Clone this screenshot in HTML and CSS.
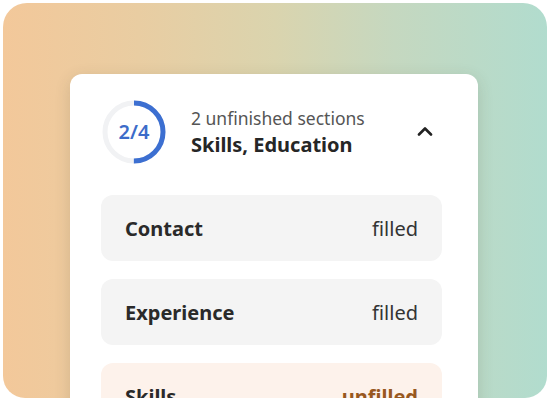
FILE: index.html
```html
<!DOCTYPE html>
<html lang="en">
<head>
<meta charset="utf-8">
<link rel="stylesheet" href="styles.css">
</head>
<body>
<div class="frame">
  <div class="card">
    <div class="header">
      <div class="ring">
        <svg class="ring-svg" width="64" height="64" viewBox="0 0 64 64">
          <circle cx="32" cy="32" r="29" fill="none" stroke="#f1f2f4" stroke-width="5"/>
          <circle cx="32" cy="32" r="29" fill="none" stroke="#3c6fd1" stroke-width="5" stroke-dasharray="91.1 200" transform="rotate(-90 32 32)"/>
        </svg>
        <span class="ring-label">2/4</span>
      </div>
      <div class="summary">
        <div class="summary-sub">2 unfinished sections</div>
        <div class="summary-title">Skills, Education</div>
      </div>
      <svg class="chevron" width="16" height="10" viewBox="0 0 16 10">
        <path d="M2 8.5 L8 2.5 L14 8.5" fill="none" stroke="#222" stroke-width="2.6" stroke-linecap="round" stroke-linejoin="round"/>
      </svg>
    </div>
    <div class="rows">
      <div class="row">
        <span class="row-name">Contact</span>
        <span class="row-state">filled</span>
      </div>
      <div class="row">
        <span class="row-name">Experience</span>
        <span class="row-state">filled</span>
      </div>
      <div class="row row-warn">
        <span class="row-name">Skills</span>
        <span class="row-state row-state-warn">unfilled</span>
      </div>
    </div>
  </div>
</div>
</body>
</html>
```

FILE: styles.css
```css
html, body {
  margin: 0;
  padding: 0;
  background: #ffffff;
}

body {
  width: 550px;
  height: 402px;
  overflow: hidden;
  font-family: "Noto Sans", "Open Sans", sans-serif;
}

.frame {
  margin: 3px;
  width: 544px;
  height: 395px;
  border-radius: 24px 24px 22px 22px;
  overflow: hidden;
  box-sizing: border-box;
  padding: 71px 0 0 67px;
  background: linear-gradient(90deg, #f3c89a 0%, #e9cda2 25%, #dad4ae 50%, #c5d8c0 72%, #b1dcce 100%);
}

.card {
  width: 408px;
  height: 400px;
  box-sizing: border-box;
  background: #ffffff;
  border-radius: 12px;
  box-shadow: 0 4px 16px rgba(60, 60, 40, 0.16);
  padding: 26px 36px 0 31px;
}

.header {
  display: flex;
  align-items: center;
  height: 63px;
  padding-left: 1px;
}

.ring {
  position: relative;
  width: 64px;
  height: 64px;
  flex: none;
}

.ring-svg {
  display: block;
}

.ring-label {
  position: absolute;
  inset: 0;
  display: flex;
  align-items: center;
  justify-content: center;
  font-size: 20px;
  font-weight: 600;
  color: #3c6cc9;
}

.summary {
  margin-left: 25px;
  display: flex;
  flex-direction: column;
  flex: 1;
}

.summary-sub {
  font-size: 17.5px;
  line-height: 26px;
  color: #555555;
}

.summary-title {
  font-size: 20px;
  line-height: 28px;
  font-weight: 700;
  color: #262626;
}

.chevron {
  flex: none;
  margin-right: 9px;
  margin-top: -2px;
}

.rows {
  margin-top: 32px;
  display: flex;
  flex-direction: column;
  gap: 18px;
}

.row {
  height: 66px;
  box-sizing: border-box;
  padding: 0 24px;
  border-radius: 12px;
  background: #f4f4f4;
  display: flex;
  align-items: center;
  justify-content: space-between;
  font-size: 20px;
  color: #2a2a2a;
}

.row-warn {
  background: #fdf2eb;
}

.row-name {
  font-weight: 700;
}

.row-state {
  font-weight: 400;
  color: #333333;
}

.row-state-warn {
  font-weight: 700;
  color: #98581f;
}
```
